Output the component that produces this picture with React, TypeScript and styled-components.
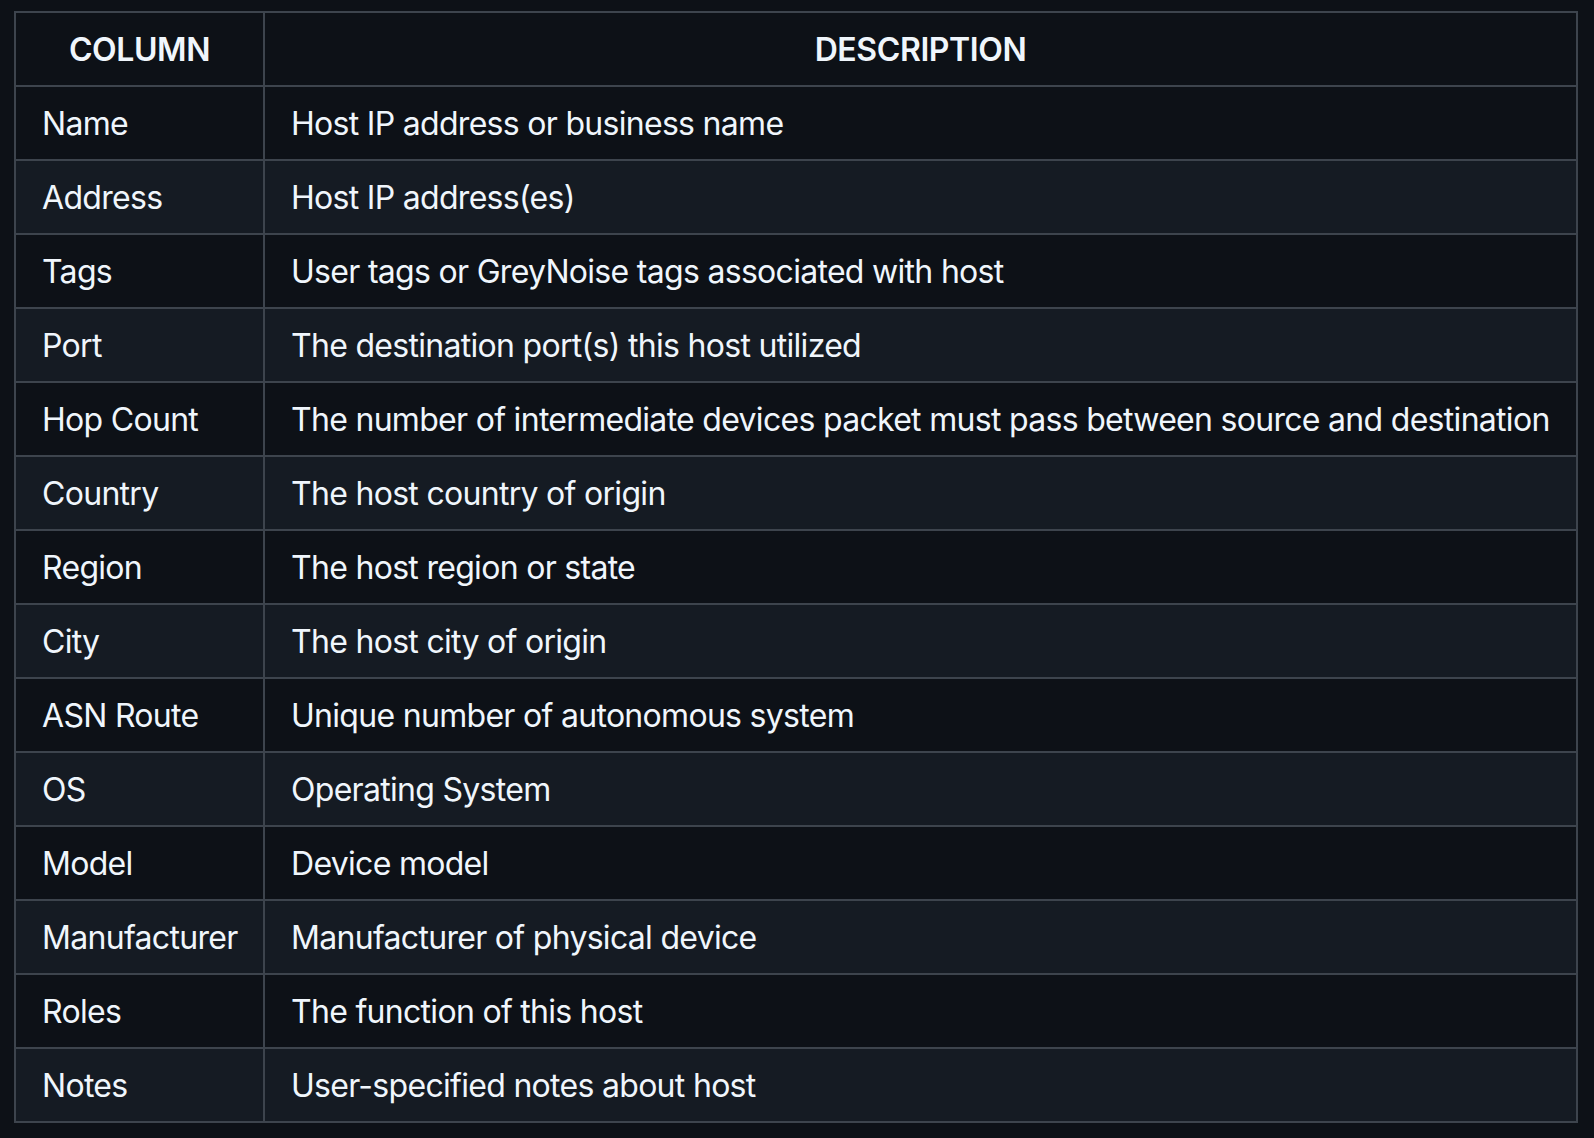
import React from "react";
import styled, { createGlobalStyle } from "styled-components";

const Global = createGlobalStyle`
  html, body {
    margin: 0;
    padding: 0;
    background: #0d1117;
  }
  body {
    font-family: Inter, "Noto Sans", "Liberation Sans", sans-serif;
    color: #f0f6fc;
  }
`;

const Page = styled.div`
  padding: 11px 0 0 14px;
  min-height: 1138px;
  box-sizing: border-box;
  background: #0d1117;
`;

const Table = styled.table`
  border-collapse: collapse;
  border-spacing: 0;
  table-layout: fixed;
  width: 1564px;
  border: 2px solid #3d444d;
  font-size: 32px;
  line-height: 48px;
  letter-spacing: -0.7px;
  color: #f0f6fc;
`;

const Row = styled.tr<{ $striped?: boolean }>`
  background: ${(p) => (p.$striped ? "#151b23" : "#0d1117")};
`;

const HeadCell = styled.th`
  border: 2px solid #3d444d;
  padding: 13px 26px 11px;
  font-weight: 600;
  text-align: center;
  text-transform: uppercase;
  white-space: nowrap;
  letter-spacing: -0.4px;
`;

const Cell = styled.td`
  border: 2px solid #3d444d;
  padding: 13px 26px 11px;
  font-weight: 400;
  text-align: left;
  white-space: nowrap;
`;

const rows: [string, string][] = [
  ["Name", "Host IP address or business name"],
  ["Address", "Host IP address(es)"],
  ["Tags", "User tags or GreyNoise tags associated with host"],
  ["Port", "The destination port(s) this host utilized"],
  ["Hop Count", "The number of intermediate devices packet must pass between source and destination"],
  ["Country", "The host country of origin"],
  ["Region", "The host region or state"],
  ["City", "The host city of origin"],
  ["ASN Route", "Unique number of autonomous system"],
  ["OS", "Operating System"],
  ["Model", "Device model"],
  ["Manufacturer", "Manufacturer of physical device"],
  ["Roles", "The function of this host"],
  ["Notes", "User-specified notes about host"],
];

export default function App() {
  return (
    <>
      <Global />
      <Page>
        <Table>
          <colgroup>
            <col style={{ width: 249 }} />
            <col />
          </colgroup>
          <thead>
            <Row>
              <HeadCell>Column</HeadCell>
              <HeadCell>Description</HeadCell>
            </Row>
          </thead>
          <tbody>
            {rows.map(([c, d], i) => (
              <Row key={c} $striped={i % 2 === 1}>
                <Cell>{c}</Cell>
                <Cell>{d}</Cell>
              </Row>
            ))}
          </tbody>
        </Table>
      </Page>
    </>
  );
}
